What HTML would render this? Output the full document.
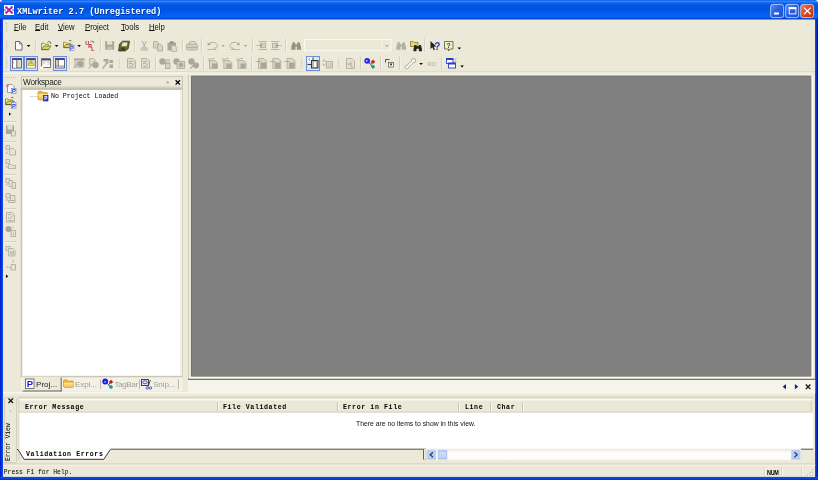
<!DOCTYPE html>
<html>
<head>
<meta charset="utf-8">
<title>XMLwriter 2.7 (Unregistered)</title>
<style>
html,body{margin:0;padding:0;}
body{width:818px;height:480px;overflow:hidden;background:#ece9d8;position:relative;font-family:"Liberation Sans",sans-serif;color:#000;}
.a{position:absolute;}
.mono{font-family:"Liberation Mono",monospace;}
#ttext{left:17px;top:5.7px;font-size:8.6px;font-weight:bold;color:#fff;white-space:nowrap;line-height:12px;text-shadow:0.5px 0.5px 0 #0a2a8a;}
.menu{top:21.9px;font-size:8.4px;line-height:11px;white-space:nowrap;color:#111;transform:scaleX(0.92);transform-origin:0 0;}
.menu u{text-decoration:underline;text-decoration-thickness:0.7px;text-underline-offset:0.3px;}
.st{font-size:6.6px;line-height:9px;white-space:nowrap;}
.b{font-weight:bold;letter-spacing:0.6px;}
.tab{top:379.5px;font-size:8.1px;line-height:10px;white-space:nowrap;color:#a19e8d;}
svg{display:block;}
</style>
</head>
<body>
<div id="root" style="position:absolute;left:0;top:0;width:818px;height:480px;will-change:transform">
<!-- BACKGROUND STRUCTURE -->
<svg class="a" id="bg" style="left:0;top:0" width="818" height="480" viewBox="0 0 818 480">
<defs>
<linearGradient id="gt" x1="0" y1="0" x2="0" y2="1">
<stop offset="0" stop-color="#1362e6"/><stop offset="0.077" stop-color="#2e84fb"/><stop offset="0.155" stop-color="#0f62ee"/>
<stop offset="0.26" stop-color="#0256e2"/><stop offset="0.51" stop-color="#0054e0"/><stop offset="0.72" stop-color="#0260f4"/>
<stop offset="0.87" stop-color="#0464f8"/><stop offset="0.95" stop-color="#0348d4"/><stop offset="1" stop-color="#0340c8"/>
</linearGradient>
<linearGradient id="gl" x1="0" y1="0" x2="1" y2="0"><stop offset="0" stop-color="#0019cf"/><stop offset="0.5" stop-color="#0538dc"/><stop offset="1" stop-color="#0b52e8"/></linearGradient>
<linearGradient id="gr" x1="0" y1="0" x2="1" y2="0"><stop offset="0" stop-color="#1c54e2"/><stop offset="0.5" stop-color="#0530c4"/><stop offset="1" stop-color="#00128c"/></linearGradient>
<linearGradient id="gb" x1="0" y1="0" x2="0" y2="1"><stop offset="0" stop-color="#0b50e6"/><stop offset="0.6" stop-color="#0a3fd6"/><stop offset="1" stop-color="#0630b8"/></linearGradient>
<linearGradient id="gbtn" x1="0" y1="0" x2="1" y2="1"><stop offset="0" stop-color="#5a90f6"/><stop offset="0.45" stop-color="#2a60e4"/><stop offset="1" stop-color="#1c50d0"/></linearGradient>
<linearGradient id="gcls" x1="0" y1="0" x2="1" y2="1"><stop offset="0" stop-color="#ee8460"/><stop offset="0.45" stop-color="#dc4a24"/><stop offset="1" stop-color="#bc3010"/></linearGradient>
<linearGradient id="gsb" x1="0" y1="0" x2="0" y2="1"><stop offset="0" stop-color="#f1f0e9"/><stop offset="0.4" stop-color="#fefefc"/><stop offset="1" stop-color="#fbfaf6"/></linearGradient>
</defs>
<!-- frame -->
<rect x="0" y="19" width="3" height="461" fill="url(#gl)"/>
<rect x="815" y="19" width="3" height="461" fill="url(#gr)"/>
<rect x="0" y="476.900" width="818" height="3.100" fill="url(#gb)"/>
<rect x="0" y="0" width="818" height="19.500" fill="url(#gt)"/>
<path d="M0 0h2.200l-2.200 2.200zM818 0h-2.200l2.200 2.200z" fill="#e4ebf8"/>
<!-- caption buttons -->
<g stroke="#fff" stroke-opacity="0.600" stroke-width="1">
<rect x="770.600" y="4.400" width="13" height="13.200" rx="2.300" fill="url(#gbtn)"/>
<rect x="785.600" y="4.400" width="13" height="13.200" rx="2.300" fill="url(#gbtn)"/>
<rect x="800.700" y="4.400" width="13" height="13.200" rx="2.300" fill="url(#gcls)"/>
</g>
<!-- toolbar bottom edge -->
<rect x="3" y="71.200" width="812" height="1.200" fill="#dcd9c8"/>
<rect x="3" y="72.400" width="185.200" height="1.600" fill="#f5f4ec"/>
<rect x="189" y="72.400" width="624.300" height="3.200" fill="#f1efe3"/>
<!-- workspace header -->
<rect x="21.600" y="76.700" width="160.900" height="10.400" fill="none" stroke="#c4c1b0" stroke-width="0.900"/>
<!-- tree -->
<rect x="20.700" y="87.900" width="162" height="289.600" fill="#cac7b6"/>
<rect x="20.700" y="87.900" width="162" height="2.100" fill="#c6c3b2"/>
<rect x="180" y="89.500" width="2.100" height="286.500" fill="#f0eee1"/>
<rect x="22.300" y="90" width="157.800" height="285.800" fill="#fff"/>
<!-- workspace tabs -->
<rect x="21.200" y="377.500" width="161.300" height="14" fill="#f3f1e6"/>
<rect x="22.400" y="376.600" width="39.100" height="14.700" fill="#ece9d8"/>
<path d="M61.200 377.500v13.800M22.400 391h39.300" stroke="#55544c" stroke-width="0.900" fill="none"/>
<path d="M22.800 377v13.600" stroke="#fdfdfb" stroke-width="0.800"/>
<path d="M100.500 379.500v9.500M139.500 379.500v9.500M178.400 379.500v9.500" stroke="#b3b09f" stroke-width="0.900"/>
<rect x="3" y="392" width="185" height="1.400" fill="#f8f7f2"/>
<!-- splitter band -->
<rect x="188.200" y="74.500" width="0.800" height="304.300" fill="#c6c3b2"/>
<rect x="189" y="74.500" width="2" height="304.300" fill="#f1efe3"/>
<!-- MDI -->
<rect x="190.900" y="75.600" width="622.400" height="302.900" fill="#fbfaf6"/>
<rect x="190.900" y="75.600" width="620.300" height="300.800" fill="#6e6d63"/>
<rect x="191.700" y="76.500" width="619.500" height="299.900" fill="#808080"/>
<!-- MDI tab strip -->
<rect x="188" y="379.800" width="627.200" height="13.800" fill="#f7f5e9"/>
<rect x="188" y="378.800" width="627.200" height="1" fill="#55544c"/>
<!-- bottom pane -->
<rect x="18" y="396.600" width="795.500" height="1.400" fill="#d6d3c2"/>
<rect x="4.500" y="397.400" width="12" height="65.200" rx="1" fill="none" stroke="#cfccba" stroke-width="0.900"/>
<rect x="18.500" y="398" width="1" height="62" fill="#d2cfbe"/>
<rect x="19.400" y="399.400" width="792.100" height="13.200" fill="#c9c6b4"/>
<rect x="19.400" y="399.400" width="791.400" height="12.300" fill="#ebe8d7"/>
<rect x="19.400" y="399.200" width="792.100" height="1.200" fill="#fefefd"/>
<rect x="19.400" y="412.700" width="793.800" height="36" fill="#fff"/>
<g stroke-width="0.900">
<path d="M217.500 402v9M337.500 402v9M458.500 402v9M490.500 402v9M522.500 402v9" stroke="#c2bfae"/>
<path d="M218.500 402v9M338.500 402v9M459.500 402v9M491.500 402v9M523.500 402v9" stroke="#fbfaf6"/>
</g>
<!-- bottom tabs row -->
<rect x="110.500" y="448.700" width="315.500" height="1" fill="#55544c"/>
<rect x="801" y="448.700" width="12.200" height="1" fill="#55544c"/>
<rect x="427" y="449.700" width="373.600" height="10.300" fill="url(#gsb)"/>
<!-- status bar -->
<rect x="3" y="463.600" width="812.200" height="1" fill="#c9c6b5"/>
<rect x="3" y="464.600" width="812.200" height="1" fill="#f8f7f1"/>
<path d="M764.500 467v9M781.500 467v9M801.700 467v9" stroke="#d3d0bf" stroke-width="0.900"/>
<path d="M765.400 467v9M782.400 467v9M802.600 467v9" stroke="#fbfaf6" stroke-width="0.900"/>

</svg>

<!-- window title -->
<div class="a mono" id="ttext">XMLwriter 2.7 (Unregistered)</div>

<!-- menu bar -->
<div class="a menu" style="left:13.7px"><u>F</u>ile</div>
<div class="a menu" style="left:35px"><u>E</u>dit</div>
<div class="a menu" style="left:58px"><u>V</u>iew</div>
<div class="a menu" style="left:85px"><u>P</u>roject</div>
<div class="a menu" style="left:121px"><u>T</u>ools</div>
<div class="a menu" style="left:149px"><u>H</u>elp</div>

<!-- workspace pane -->
<div class="a" style="left:23px;top:76.8px;font-size:8.3px;line-height:10px;white-space:nowrap;letter-spacing:-0.3px;color:#1a1a1a">Workspace</div>
<div class="a mono st" style="left:51px;top:92.4px;">No Project Loaded</div>
<div class="a tab" style="left:36px;color:#222">Proj...</div>
<div class="a tab" style="left:75px;letter-spacing:-0.1px">Expl...</div>
<div class="a tab" style="left:114.5px;letter-spacing:-0.4px">TagBar</div>
<div class="a tab" style="left:153px;letter-spacing:-0.1px">Snip...</div>

<!-- ICONS -->
<svg class="a" id="ico" style="left:0;top:0" width="818" height="480" viewBox="0 0 818 480">
<!-- title icon -->
<rect x="4" y="5" width="10" height="10" fill="#fff"/>
<path d="M5.5 6.5l7 7M12.5 6.5l-7 7" stroke="#b020b0" stroke-width="1.8" fill="none"/>
<path d="M4.5 10l1.5-1.5M4.5 10l1.5 1.5M13.5 10l-1.5-1.5M13.5 10l-1.5 1.5" stroke="#303090" stroke-width="0.8" fill="none"/>
<!-- caption glyphs -->
<rect x="774" y="12.5" width="5" height="2" fill="#fff"/>
<rect x="789.200" y="7.700" width="6.700" height="6.200" fill="none" stroke="#fff" stroke-width="0.900"/>
<rect x="788.800" y="7.200" width="7.500" height="2" fill="#fff"/>
<path d="M804 7.600l6.700 6.700M810.700 7.600l-6.700 6.700" stroke="#fff" stroke-width="1.300" fill="none"/>
<!-- grips -->
<g stroke="#c4c1af" stroke-width="1.200" stroke-dasharray="1 1" fill="none">
<path d="M6.500 23v10M6.500 41v10M6.500 59v10"/>
<path d="M5 77.5h11"/>
</g>
<!-- TB1 separators -->
<g stroke="#ceccba" stroke-width="0.900" fill="none">
<path d="M35.500 38.500v13.500M100.500 38.500v13.500M134.500 38.500v13.500M182.500 38.500v13.500M201.500 38.500v13.500M252.500 38.500v13.500M285.500 38.500v13.500M424.500 38.500v13.500"/>
<path d="M69.500 56.500v13.500M155.500 56.500v13.500M203.500 56.500v13.500M251.500 56.500v13.500M360.500 56.500v13.500M380.500 56.500v13.500M399.500 56.500v13.500M441.500 56.500v13.500"/>
<path d="M4 121.500h13M4 141.500h13M4 174.500h13M4 208.500h13M4 241.500h13"/>
</g>
<g stroke="#f6f5ee" stroke-width="0.800" fill="none">
<path d="M36.400 38.500v13.500M101.400 38.500v13.500M135.400 38.500v13.500M183.400 38.500v13.500M202.400 38.500v13.500M253.400 38.500v13.500M286.400 38.500v13.500M425.400 38.500v13.500"/>
<path d="M70.400 56.500v13.500M156.400 56.500v13.500M204.400 56.500v13.500M252.400 56.500v13.500M361.400 56.500v13.500M381.400 56.500v13.500M400.400 56.500v13.500M442.400 56.500v13.500"/>
<path d="M4 122.400h13M4 142.400h13M4 175.400h13M4 209.400h13M4 242.400h13"/>
</g>
<g stroke="#cac7b5" stroke-width="1.100" stroke-dasharray="1 1" fill="none">
<path d="M119.500 59v10M301.500 59v10M338.500 59v10"/>
</g>
<!-- dropdown arrows -->
<g fill="#000">
<path d="M26.8 45h3.6l-1.8 2z"/>
<path d="M54.8 45h3.6l-1.8 2z"/>
<path d="M77.3 45h3.6l-1.8 2z"/>
<path d="M457.5 47.5h3.6l-1.8 2z"/>
<path d="M419.3 63h3.6l-1.8 2z"/>
<path d="M460.3 65.5h3.6l-1.8 2z"/>
<path d="M9 112.5l2 1.6l-2 1.6z"/>
<path d="M6 274.5l2.2 1.7l-2.2 1.7z"/>
</g>
<g fill="#aca899">
<path d="M221.5 45h3.4l-1.7 2z"/>
<path d="M243.8 45h3.4l-1.7 2z"/>
</g>
<!-- new doc -->
<path d="M15.5 41.5h4l2.5 2.5v6h-6.5z" fill="#fff" stroke="#5a5a5a" stroke-width="0.9"/>
<path d="M19.5 41.5v2.5h2.5" fill="none" stroke="#5a5a5a" stroke-width="0.7"/>
<!-- open folder -->
<path d="M41.500 49.300v-6h2.500l1 1h3.500v1.500" fill="#f6f1aa" stroke="#77742e" stroke-width="0.700"/>
<path d="M41.500 49.500l2.200-3.500h7.300l-2.200 3.500z" fill="#d9d05e" stroke="#6e6a28" stroke-width="0.700"/>
<path d="M41.500 49.700h7.500" stroke="#66642a" stroke-width="0.800"/>
<path d="M47.500 42.500c1-1.200 2.500-1.200 3.200 0.300" fill="none" stroke="#333" stroke-width="0.700"/>
<path d="M50 43.800l1.300-0.200l-0.300-1.300z" fill="#333"/>
<!-- open project -->
<path d="M63.500 47.300v-5h2.500l1 1h3.500v1.500" fill="#f6f1aa" stroke="#77742e" stroke-width="0.700"/>
<path d="M63.500 47.500l2-3h6.800l-2 3z" fill="#d9d05e" stroke="#6e6a28" stroke-width="0.700"/>
<path d="M63.500 47.700h6.500" stroke="#66642a" stroke-width="0.800"/>
<path d="M69 41c0.800-0.900 2-0.900 2.600 0.200" fill="none" stroke="#333" stroke-width="0.700"/>
<rect x="69.600" y="45.300" width="4.400" height="5.200" fill="#fff" stroke="#6878d8" stroke-width="0.600"/>
<text x="70.100" y="50" font-family="Liberation Sans, sans-serif" font-size="5.600" font-weight="bold" fill="#1030f0">P</text>
<!-- URL -->
<g font-family="Liberation Sans, sans-serif" font-weight="bold" font-size="5.200" fill="#b01828">
<text x="85.200" y="45">U</text><text x="88.200" y="48.300">R</text><text x="91.300" y="51.300">L</text>
</g>
<path d="M90.500 41.800c1.200-1 2.600-0.800 3.300 0.300" fill="none" stroke="#444" stroke-width="0.700"/>
<path d="M93.200 43l1.300-0.400l-0.600-1.200z" fill="#444"/>
<!-- save (disabled) -->
<path d="M105.200 41h9v8.600h-9z" fill="#aca899"/>
<rect x="107" y="41" width="5.200" height="3.600" fill="#e4e1d0"/>
<rect x="107.300" y="46.600" width="4.800" height="3" fill="#c4c1af"/>
<!-- save all -->
<path d="M119.5 44l3-2.8h7l-1.3 7.5l-3 2.3h-6.7z" fill="#6e6a20" stroke="#2c2c18" stroke-width="0.7"/>
<path d="M122.5 42.5h5l-0.8 3.8h-5z" fill="#e8e6d8"/>
<path d="M121 47.5h4.2l-0.5 3h-4.2z" fill="#3c3c30"/>
<!-- cut -->
<g stroke="#aca899" stroke-width="0.9" fill="none">
<path d="M142.3 41l2.6 6.5M146.2 41l-2.6 6.5"/>
<circle cx="142.4" cy="49" r="1.4"/><circle cx="146" cy="49" r="1.4"/>
</g>
<!-- copy -->
<g fill="#d8d5c4" stroke="#aca899" stroke-width="0.8">
<path d="M153.5 41.5h3.5l1.5 1.5v5h-5z"/>
<path d="M157.5 44.5h3.5l1.5 1.5v5h-5z"/>
</g>
<!-- paste -->
<path d="M167.5 42.5h8.5v8h-8.5z" fill="#aca899"/>
<rect x="170" y="41.3" width="3.5" height="2" fill="#8f8c7c"/>
<path d="M171.5 45.5h3.5l1.8 1.8v4.2h-5.3z" fill="#dedbca" stroke="#aca899" stroke-width="0.7"/>
<!-- print -->
<g stroke="#aca899" stroke-width="0.8">
<path d="M188.5 44.5l1.5-3h5l1.5 3" fill="#e4e1d0"/>
<path d="M186.5 45.5c0-1 .8-1.5 1.5-1.5h8c.8 0 1.5 .5 1.5 1.5v3c0 1-.8 1.5-1.5 1.5h-8c-.8 0-1.5-.5-1.5-1.5z" fill="#d2cfbe"/>
<path d="M187 47.5h10"/>
</g>
<!-- undo -->
<g>
<path d="M209 44.200c2-2.600 6.500-2.600 8 0.300c1 2.200-1 3.800-3.500 3.800" stroke="#aca899" stroke-width="0.900" fill="none"/>
<path d="M207.500 49.500h9" stroke="#aca899" stroke-width="0.800" fill="none"/>
<path d="M207.500 42.300l0.400 3.200l2.900-1z" fill="#aca899"/>
</g>
<g transform="translate(447.300,0) scale(-1,1)">
<path d="M209 44.200c2-2.600 6.500-2.600 8 0.300c1 2.200-1 3.800-3.500 3.800" stroke="#aca899" stroke-width="0.900" fill="none"/>
<path d="M207.500 49.500h9" stroke="#aca899" stroke-width="0.800" fill="none"/>
<path d="M207.500 42.300l0.400 3.200l2.900-1z" fill="#aca899"/>
</g>
<!-- indent/outdent -->
<g stroke="#aca899" stroke-width="0.800" fill="none">
<path d="M258.500 41.500h8.500M258.500 49.500h8.500M256.500 45.500h5"/>
<rect x="260.500" y="43.300" width="5" height="4.400" fill="#dcd9c8"/>
<path d="M260.800 44l1.800 1.500l-1.800 1.500z" fill="#aca899"/>
<path d="M271 41.500h8.500M271 49.500h8.500M276.500 45.500h5"/>
<rect x="272.500" y="43.300" width="5" height="4.400" fill="#dcd9c8"/>
<path d="M277.200 44l-1.800 1.500l1.800 1.500z" fill="#aca899"/>
</g>
<!-- binoculars 1 (disabled) -->
<g fill="#959282">
<path d="M291.300 49.800v-2.800l1.400-4.800h2l0.800 2.200v5.400z"/>
<path d="M301 49.800v-2.800l-1.400-4.800h-2l-0.800 2.200v5.400z"/>
<rect x="295" y="44.600" width="2.300" height="1.800"/>
</g>
<!-- combo -->
<rect x="304.500" y="39.500" width="86.500" height="11.300" fill="#ece9d8" stroke="#f9f8f1" stroke-width="1"/>
<path d="M382 40v10.500" stroke="#f6f4ea" stroke-width="0.800"/>
<path d="M385.200 45h3.400l-1.700 1.900z" fill="#aca899"/>
<!-- binoculars 2 (disabled lighter) -->
<g fill="#b3b09f">
<path d="M396.300 49.800v-2.800l1.400-4.800h2l0.800 2.200v5.400z"/>
<path d="M406 49.800v-2.800l-1.400-4.800h-2l-0.800 2.200v5.400z"/>
<rect x="400" y="44.600" width="2.300" height="1.800"/>
</g>
<!-- find in files -->
<path d="M410.500 41.500h2.500l1 1h4v4h-7.500z" fill="#e6d85a" stroke="#6e6a28" stroke-width="0.7"/>
<path d="M414.500 45h2v1.300h2.400v-1.300h2l1 4v2.300h-3v-2.500h-2.400v2.500h-3v-2.300z" fill="#202020"/>
<!-- help pointer -->
<path d="M430.500 41l0 8l1.900-1.700l1.300 2.900l1.300-0.600l-1.300-2.800l2.600-0.200z" fill="#222"/>
<text x="434.300" y="49.500" font-family="Liberation Sans, sans-serif" font-size="10" font-weight="bold" fill="#2a35b8">?</text>
<!-- help box -->
<path d="M444.500 41.500h8.500v7.500h-3l-1.500 2v-2h-4z" fill="#f1efb8" stroke="#555" stroke-width="0.8"/>
<text x="446.500" y="48" font-family="Liberation Sans, sans-serif" font-size="7" font-weight="bold" fill="#2a35b8">?</text>

<!-- TB2 checked buttons -->
<g fill="#dde4f3" stroke="#6a8fdc" stroke-width="1">
<rect x="10.500" y="56.500" width="13" height="14"/>
<rect x="24.500" y="56.500" width="13" height="14"/>
<rect x="53.500" y="56.500" width="13" height="14"/>
<rect x="306.500" y="56.500" width="13" height="14"/>
</g>
<!-- view icon 1 -->
<rect x="12.500" y="58.500" width="9" height="9.500" fill="#e3dcc6" stroke="#4a4a52" stroke-width="0.8"/>
<rect x="12.500" y="58.300" width="9" height="1.700" fill="#3c3c98"/>
<rect x="13" y="60" width="3.600" height="7.600" fill="#fff"/>
<rect x="13" y="61" width="1" height="3" fill="#f0e040"/>
<path d="M16.800 60v8" stroke="#4a4a52" stroke-width="0.8"/>
<!-- view icon 2 -->
<rect x="26.500" y="58.500" width="9" height="9.500" fill="#d4cfbc" stroke="#6a6a70" stroke-width="0.8"/>
<rect x="26.500" y="58.300" width="9" height="1.700" fill="#3c3c98"/>
<rect x="27" y="66" width="8" height="1.600" fill="#fff"/>
<path d="M31 60.300l3 5.400h-6z" fill="#f4ec30" stroke="#8a8420" stroke-width="0.5"/>
<path d="M31 62.300v1.800" stroke="#555" stroke-width="0.7"/>
<!-- view icon 3 (wrench) -->
<rect x="41.500" y="59" width="9" height="8.500" fill="#e3dcc6" stroke="#5a5a62" stroke-width="0.8"/>
<rect x="41.500" y="58.500" width="9" height="1.800" fill="#3c3c98"/>
<rect x="44.500" y="65" width="5.600" height="2" fill="#fff"/>
<path d="M41.200 68.300l5.300-5.300" stroke="#fff" stroke-width="2" stroke-linecap="round"/>
<path d="M47.300 60.600a2 2 0 1 0 1.800 2.700l-1.600-0.300l-0.700-1.200z" fill="#fff" stroke="#c8c4b2" stroke-width="0.300"/>
<!-- view icon 4 -->
<rect x="55.500" y="58.500" width="9" height="9.500" fill="#fff" stroke="#4a4a52" stroke-width="0.8"/>
<rect x="55.500" y="58.300" width="9" height="1.700" fill="#3c3c98"/>
<rect x="56" y="60" width="2.200" height="6" fill="#d8d2bc"/>
<rect x="56.400" y="61" width="0.900" height="3" fill="#f0e040"/>
<path d="M58.400 60v6M56 66.200h8.500" stroke="#4a4a52" stroke-width="0.700"/>
<rect x="56" y="66.500" width="8" height="1.300" fill="#b8b4c8"/>

<!-- TB2 gray group 1 -->
<g fill="#aca899">
<rect x="74" y="58.500" width="10.500" height="9.500" fill="#cfccbb"/>
<rect x="74" y="58.500" width="10.500" height="1.600"/>
<circle cx="80.500" cy="64" r="3"/>
<path d="M74 68l4.500-6" stroke="#aca899" stroke-width="1" fill="none"/>
<path d="M89.500 58.500h4l1.500 1.500v5h-5.500z" fill="#dcd9c8" stroke="#aca899" stroke-width="0.800"/>
<circle cx="95.500" cy="65" r="3.200"/>
<path d="M88.700 68.500l3.500-4" stroke="#aca899" stroke-width="1.100" fill="none"/>
<path d="M102.500 68.500l5-6" stroke="#aca899" stroke-width="1.200" fill="none"/>
<path d="M103.500 59h5v2.500h-5z"/>
<path d="M109.500 60h3.500v3h-3.500zM109.500 64.500h3.500v3.500h-3.500zM105.500 61.500h3v2h-3z"/>
</g>
<!-- doc check icons -->
<g fill="#e0ddcc" stroke="#aca899" stroke-width="0.800">
<path d="M127.500 58.500h5.500l2.500 2.500v7h-8z"/>
<path d="M141.500 58.500h5.500l2.500 2.500v7h-8z"/>
</g>
<g fill="none" stroke="#aca899" stroke-width="0.900">
<path d="M129 61.500h4M129 63.500h3M129.500 65.500l1.500 1.500l3-3.500"/>
<path d="M143 61.500h4M143 63.500h3M143.500 65.500l1.500 1.500l3-3.500"/>
</g>
<!-- gray group 2 -->
<g fill="#aca899">
<circle cx="162.500" cy="61.500" r="3.200"/>
<rect x="165.500" y="63.500" width="4.500" height="5" fill="#d4d1c0" stroke="#aca899" stroke-width="0.800"/>
<rect x="166.500" y="59.500" width="3" height="3" fill="#dcd9c8" stroke="#aca899" stroke-width="0.600"/>
<circle cx="176.500" cy="61.500" r="3.200"/>
<rect x="177" y="61.500" width="7.500" height="7" fill="#d4d1c0" stroke="#aca899" stroke-width="0.800"/>
<circle cx="181" cy="65" r="2.300"/>
<circle cx="191.500" cy="61.500" r="3.200"/>
<circle cx="196" cy="65.500" r="3"/>
<path d="M190.500 68.500l4.500-5" stroke="#aca899" stroke-width="1.200" fill="none"/>
</g>
<!-- gray group 3: three similar docs -->
<g>
<path d="M209.500 60.500h5.500l2.500 2.500v5.500h-8z" fill="#d9d6c5" stroke="#aca899" stroke-width="0.800"/>
<path d="M212 63.500h5v4.500h-5z" fill="#aca899"/>
<path d="M207.500 59h4M208 60.500h2.500M211.500 58.500h3" stroke="#aca899" stroke-width="0.700"/>
</g>
<g transform="translate(14.300,0)">
<path d="M209.500 60.500h5.500l2.500 2.500v5.500h-8z" fill="#d9d6c5" stroke="#aca899" stroke-width="0.800"/>
<path d="M212 63.500h5v4.500h-5z" fill="#aca899"/>
<path d="M207.500 59h4M208 60.500h2.500M211.500 58.500h3" stroke="#aca899" stroke-width="0.700"/>
</g>
<g transform="translate(28.500,0)">
<path d="M209.500 60.500h5.500l2.500 2.500v5.500h-8z" fill="#d9d6c5" stroke="#aca899" stroke-width="0.800"/>
<path d="M212 63.500h5v4.500h-5z" fill="#aca899"/>
<path d="M207.500 59h4M208 60.500h2.500M211.500 58.500h3" stroke="#aca899" stroke-width="0.700"/>
</g>
<!-- gray group 4 -->
<g>
<path d="M258.500 58.500h5.500l2.500 2.500v7.500h-8z" fill="#dcd9c8" stroke="#aca899" stroke-width="0.800"/>
<path d="M260.500 62.500h5.500v5.500h-5.500z" fill="#aca899"/>
<path d="M255.500 61.500h4.500" stroke="#aca899" stroke-width="0.800"/>
<path d="M259 60l1.800 1.500l-1.800 1.500z" fill="#aca899"/>
</g>
<g transform="translate(14.300,0)">
<path d="M258.500 58.500h5.500l2.500 2.500v7.500h-8z" fill="#dcd9c8" stroke="#aca899" stroke-width="0.800"/>
<path d="M260.500 62.500h5.500v5.500h-5.500z" fill="#aca899"/>
<path d="M255.500 61.500h4.500" stroke="#aca899" stroke-width="0.800"/>
<path d="M259 60l1.800 1.500l-1.800 1.500z" fill="#aca899"/>
</g>
<g transform="translate(28.500,0)">
<path d="M258.500 58.500h5.500l2.500 2.500v7.500h-8z" fill="#dcd9c8" stroke="#aca899" stroke-width="0.800"/>
<path d="M260.500 62.500h5.500v5.500h-5.500z" fill="#aca899"/>
<path d="M255.500 61.500h4.500" stroke="#aca899" stroke-width="0.800"/>
<path d="M259 60l1.800 1.500l-1.800 1.500z" fill="#aca899"/>
</g>
<!-- checked icon -->
<rect x="307.500" y="57.500" width="5" height="4.500" fill="#fff"/>
<path d="M310 58.500l-1.500 1l1.500 1" stroke="#5050e0" stroke-width="0.600" fill="none"/>
<rect x="311.500" y="60.500" width="6.500" height="7.500" fill="#b9b9b9" stroke="#2a2a2a" stroke-width="0.900"/>
<rect x="314" y="62" width="2" height="5" fill="#fff"/>
<path d="M307.500 64.500h4M313 57.500v3" stroke="#2a2a2a" stroke-width="0.900"/>
<!-- next gray icon -->
<rect x="326.500" y="61.500" width="6" height="6.500" fill="#e0ddcc" stroke="#aca899" stroke-width="0.800"/>
<path d="M329 63v4M331 63v4" stroke="#aca899" stroke-width="0.600"/>
<path d="M322.500 62l1.500-2.500l1.500 2.500M322.500 63.500l1.500 2.500l1.500-2.500" stroke="#aca899" stroke-width="0.800" fill="none"/>
<!-- doc with arrow -->
<path d="M346.500 58.500h5.500l2.500 2.500v7.500h-8z" fill="#e4e1d0" stroke="#aca899" stroke-width="0.800"/>
<path d="M345.500 64h5M351 61.500v5.500h2" stroke="#aca899" stroke-width="0.700" fill="none"/>
<path d="M349.500 62.500l1.700 1.500l-1.700 1.500z" fill="#aca899"/>
<!-- tagbar icon -->
<circle cx="367.200" cy="60.800" r="2.900" fill="#2a2af0"/>
<text x="366.300" y="62.300" font-family="Liberation Sans, sans-serif" font-size="4" font-weight="bold" fill="#fff">r</text>
<path d="M369 62.700l1.600 1.500l2-2.400M370.600 64.200l2 2.300" stroke="#333" stroke-width="0.900" fill="none"/>
<path d="M373 59.500l2.200 2.200l-2.200 2.200l-2.200-2.200z" fill="#c8282a"/>
<path d="M373 64.500l2.200 2.200l-2.200 2.200l-2.200-2.200z" fill="#1e9a9a"/>
<!-- small icon -->
<path d="M385.500 62.500v-3h4" stroke="#444" stroke-width="0.900" fill="none"/>
<rect x="388.500" y="62.500" width="5" height="4.500" fill="#fff" stroke="#555" stroke-width="0.700"/>
<path d="M389.500 63.500h3l-1.500 2.500z" fill="#222"/>
<!-- wrench -->
<path d="M406.800 67.300l6-6" stroke="#8f8d7d" stroke-width="2.800" stroke-linecap="round"/>
<circle cx="413.600" cy="60.600" r="2.300" fill="#8f8d7d"/>
<circle cx="406.600" cy="67.400" r="1.900" fill="#8f8d7d"/>
<path d="M406.800 67.300l6-6" stroke="#fff" stroke-width="1.700" stroke-linecap="round"/>
<circle cx="413.600" cy="60.600" r="1.600" fill="#fff"/>
<circle cx="406.600" cy="67.400" r="1.200" fill="#fff"/>
<path d="M413.800 58.500l1.800 1.800l-1.200 0.800l-1.200-1.200z" fill="#ece9d8"/>
<path d="M405 68l1 1l0.800-1.200z" fill="#ece9d8"/>
<text x="427.200" y="65.900" font-family="Liberation Sans, sans-serif" font-size="6" fill="#aeab9a">RO</text>
<!-- windows icon -->
<g fill="#fff" stroke="#2a3ac8" stroke-width="0.900">
<rect x="446.500" y="58.500" width="6.500" height="5"/>
<rect x="448.500" y="63" width="7" height="5"/>
</g>
<rect x="446.500" y="58.300" width="6.500" height="1.700" fill="#2a3ac8"/>
<rect x="448.500" y="62.800" width="7" height="1.700" fill="#2a3ac8"/>
<path d="M454.500 60l1.500-1.500M455 61.500h1.500" stroke="#5060e0" stroke-width="0.600"/>
<defs><linearGradient id="gfold" x1="0" y1="0" x2="0" y2="1"><stop offset="0" stop-color="#fdec9c"/><stop offset="1" stop-color="#f3bf48"/></linearGradient></defs>
<!-- LEFT TOOLBAR -->
<!-- new project -->
<path d="M7.500 84.500h4.500l2 2v6h-6.500z" fill="#fff" stroke="#777" stroke-width="0.700"/>
<path d="M6 85.800h3M7.500 84.300v3M6.400 84.700l2.200 2.200M8.600 84.700l-2.200 2.200" stroke="#f050d0" stroke-width="0.700"/>
<rect x="11.500" y="88.300" width="4.500" height="5.300" fill="#fff" stroke="#6070c8" stroke-width="0.600"/>
<text x="12" y="93" font-family="Liberation Sans, sans-serif" font-size="5.600" font-weight="bold" fill="#1030f0">P</text>
<!-- open project -->
<path d="M5.500 104.300v-5.300h2.500l1 1h3.500v1.500" fill="#f6f1aa" stroke="#66642a" stroke-width="0.700"/>
<path d="M5.500 104.500l2-3.300h6.800l-2 3.300z" fill="#d9d05e" stroke="#5e5c28" stroke-width="0.700"/>
<path d="M5.500 104.700h6.500" stroke="#55532a" stroke-width="0.800"/>
<path d="M11 98c0.800-0.900 2-0.900 2.600 0.200" fill="none" stroke="#333" stroke-width="0.700"/>
<rect x="11.500" y="102.800" width="4.500" height="5.300" fill="#fff" stroke="#6070c8" stroke-width="0.600"/>
<text x="12" y="107.500" font-family="Liberation Sans, sans-serif" font-size="5.600" font-weight="bold" fill="#1030f0">P</text>
<!-- save project gray -->
<rect x="6" y="125.500" width="8" height="8.500" fill="#aca899"/>
<rect x="7.500" y="125.500" width="5" height="4" fill="#e4e1d0"/>
<rect x="11.500" y="131" width="4" height="5" fill="#e4e1d0" stroke="#aca899" stroke-width="0.700"/>
<!-- gray icons -->
<g fill="#e6e3d2" stroke="#aca899" stroke-width="0.800">
<path d="M6 145.500h3.500v4h-3.500z"/>
<path d="M9.500 148.500h4l2 2v4.500h-6z"/>
<path d="M6 159.500h3.500v4h-3.500z"/>
<path d="M8.500 168.500v-4h3l1 1h3v3z"/>
<path d="M6 178.500h3.500v4.500h-3.500z"/>
<path d="M9 180.500h3.500v6h-3.500z"/>
<path d="M12 182.500h3.500v6h-3.500z"/>
<path d="M6 193.500h4v4.500h-4z"/>
<path d="M10.500 195.500h4.500v5h-4.500z"/>
<path d="M8.500 200.500h6.500v2h-6.500z"/>
<path d="M6.500 212.500h5.500l2.500 2.500v7h-8z"/>
<path d="M11 230.500h4.500v6h-4.500z"/>
<path d="M6 246.500h4v4h-4z"/>
<path d="M8.500 248.500h4.500l2 2v5.500h-6.500z"/>
<path d="M11 264.500h4.500v5.500h-4.500z"/>
</g>
<g fill="none" stroke="#aca899" stroke-width="0.800">
<path d="M8 214.500h3M8 217l1.500 2l3-3.500M8 220.500h5"/>
<path d="M10.500 251v3l1.500 1l1.500-1v-3M12 251v3"/>
<path d="M12 228l2-1.500M13.500 233v2"/>
<path d="M12 263c2-1 2-3 0.500-3.500M6 268l2-1.500l1.500 1.500l1.500-1"/>
</g>
<circle cx="8.500" cy="229" r="3" fill="#aca899"/>
<g fill="#aca899">
<rect x="6.300" y="151.500" width="1" height="2.500"/><rect x="6.300" y="165.500" width="1" height="2.500"/>
<rect x="6.300" y="184" width="1" height="1.500"/><rect x="6.300" y="199" width="1" height="2"/>
</g>
<!-- toolbar right edge -->

<!-- workspace header icons -->
<path d="M175.600 80.200l4.400 4.400M180 80.200l-4.400 4.400" stroke="#000" stroke-width="1.300"/>
<path d="M165.800 83.300h3.800l-1.900-2.200z" fill="#a8a594"/>
<!-- tree -->
<path d="M30 96.500h8" stroke="#b0b0b0" stroke-width="0.800" stroke-dasharray="1 0.700"/>
<path d="M38 92.500c0-0.700 0.500-1.200 1.200-1.200h2.600l1 1.200h3.700c0.700 0 1.200 0.500 1.200 1.200v5c0 0.700-0.500 1.200-1.200 1.200h-7.300c-0.700 0-1.200-0.500-1.200-1.200z" fill="#eeb440" stroke="#c08418" stroke-width="0.600"/>
<path d="M38.500 94h9v4.500c0 0.500-0.300 0.800-0.800 0.800h-7.400c-0.500 0-0.800-0.300-0.800-0.800z" fill="url(#gfold)"/>
<rect x="43.500" y="95.500" width="4.500" height="5.500" fill="#2a3af0" stroke="#222" stroke-width="0.600"/>
<text x="44.300" y="100.200" font-family="Liberation Sans, sans-serif" font-size="4.800" font-weight="bold" fill="#fff">P</text>

<!-- workspace tab icons -->
<rect x="25.500" y="379" width="8.500" height="9.500" fill="#fff" stroke="#555" stroke-width="0.800"/>
<text x="26.800" y="387.300" font-family="Liberation Sans, sans-serif" font-size="9.500" font-weight="bold" fill="#1515f0">P</text>
<path d="M63.500 381c0-0.700 0.500-1.200 1.200-1.200h2.300l1 1.200h4.300c0.700 0 1.200 0.500 1.200 1.200v4c0 0.700-0.500 1.200-1.200 1.200h-7.600c-0.700 0-1.200-0.500-1.200-1.200z" fill="#eeb440" stroke="#c88e20" stroke-width="0.600"/>
<path d="M64 382.800h9.500v3.200c0 0.600-0.400 1-1 1h-7.500c-0.600 0-1-0.400-1-1z" fill="url(#gfold)"/>
<circle cx="105.200" cy="381.500" r="2.900" fill="#1a1af0"/>
<text x="104.400" y="383" font-family="Liberation Sans, sans-serif" font-size="4" font-weight="bold" fill="#fff">r</text>
<path d="M107 383.200l1.600 1.600l2-2.600M108.600 384.800l2 2.400" stroke="#333" stroke-width="0.900" fill="none"/>
<path d="M111 379.700l2.200 2.200l-2.200 2.200l-2.200-2.200z" fill="#b02020"/>
<path d="M111 384.800l2.200 2.200l-2.200 2.200l-2.200-2.200z" fill="#1e9a9a"/>
<rect x="141.500" y="379.500" width="7" height="6" fill="#e8e8f0" stroke="#333" stroke-width="0.900"/>
<ellipse cx="145" cy="382.300" rx="2.300" ry="1.500" fill="none" stroke="#2a35c8" stroke-width="0.800"/>
<path d="M150.500 380l-2.500 6.500" stroke="#222" stroke-width="0.800"/>
<circle cx="147.300" cy="388" r="1.200" fill="none" stroke="#2a35c8" stroke-width="0.800"/>
<circle cx="150.500" cy="388" r="1.200" fill="none" stroke="#2a35c8" stroke-width="0.800"/>

<!-- MDI tab strip buttons -->
<path d="M786 384.100v5.200l-3.300-2.600z" fill="#16169a"/>
<path d="M794.900 384.100v5.200l3.300-2.600z" fill="#16169a"/>
<path d="M805.800 384.500l4.600 4.600M810.400 384.500l-4.600 4.600" stroke="#111" stroke-width="1.300"/>

<!-- bottom pane caption icons -->
<path d="M8.500 398.500l4.500 4.500M13 398.500l-4.500 4.500" stroke="#111" stroke-width="1.200"/>
<path d="M10 409.800l1.600 1.500l-1.600 1.500z" fill="#c0bdac"/>
<!-- validation tab -->
<path d="M17 449.500h1l6 9.800h79.800l6.500-9.800" fill="#fff" stroke="#222" stroke-width="0.900"/>
<path d="M19 449h91" stroke="#fff" stroke-width="1.200"/>
<!-- scrollbar -->
<rect x="423.100" y="449.200" width="2.900" height="10.500" fill="#fdfdfb"/>
<path d="M423.600 449.200v10.500" stroke="#55544c" stroke-width="1"/>
<path d="M425.700 450v9.700M423.500 459.400h2.500" stroke="#c0bdac" stroke-width="0.700" fill="none"/>
<rect x="427.100" y="450.100" width="9" height="9.200" rx="0.800" fill="#bacff8"/>
<rect x="427.100" y="458.600" width="9" height="0.800" fill="#9db8f0"/>
<path d="M433 452.200l-2.800 2.500l2.800 2.500" stroke="#35456b" stroke-width="1.400" fill="none"/>
<rect x="437.800" y="450.100" width="9.500" height="9.200" rx="0.800" fill="#b4cbf8"/>
<rect x="437.800" y="458.600" width="9.500" height="0.800" fill="#9db8f0"/>
<path d="M440.200 452.500v4.500M442.500 452.500v4.500M444.800 452.500v4.500M440.200 452.800h4.600" stroke="#dfe9fc" stroke-width="0.900" fill="none"/>
<rect x="791.200" y="450.100" width="9.300" height="9.200" rx="0.800" fill="#bacff8"/>
<rect x="791.200" y="458.600" width="9.300" height="0.800" fill="#9db8f0"/>
<path d="M794.400 452.200l2.800 2.500l-2.800 2.500" stroke="#35456b" stroke-width="1.400" fill="none"/>
<!-- size grip -->
<g fill="#fdfdfb">
<rect x="813" y="469.800" width="1.300" height="1.300"/><rect x="810.300" y="472.600" width="1.300" height="1.300"/><rect x="813" y="472.600" width="1.300" height="1.300"/>
<rect x="807.600" y="475.300" width="1.300" height="1.300"/><rect x="810.300" y="475.300" width="1.300" height="1.300"/><rect x="813" y="475.300" width="1.300" height="1.300"/>
</g>
<g fill="#c5c2b0">
<rect x="812.300" y="469.100" width="1.300" height="1.300"/><rect x="809.600" y="471.900" width="1.300" height="1.300"/><rect x="812.300" y="471.900" width="1.300" height="1.300"/>
<rect x="806.900" y="474.600" width="1.300" height="1.300"/><rect x="809.600" y="474.600" width="1.300" height="1.300"/><rect x="812.300" y="474.600" width="1.300" height="1.300"/>
</g>

</svg>

<!-- bottom pane (error view) -->
<div class="a mono" style="left:5px;top:461px;height:8px;font-size:6.6px;line-height:8px;white-space:nowrap;transform:rotate(-90deg);transform-origin:0 0;letter-spacing:-0.2px">Error View</div>
<div class="a mono st b" style="left:25px;top:403px">Error Message</div>
<div class="a mono st b" style="left:223px;top:403px">File Validated</div>
<div class="a mono st b" style="left:343px;top:403px">Error in File</div>
<div class="a mono st b" style="left:465px;top:403px">Line</div>
<div class="a mono st b" style="left:497px;top:403px">Char</div>
<div class="a" style="left:356.2px;top:419.4px;font-size:7.9px;line-height:10px;white-space:nowrap;transform:scaleX(0.864);transform-origin:0 0;color:#111">There are no items to show in this view.</div>
<div class="a mono st b" style="left:26px;top:450px">Validation Errors</div>

<!-- status bar -->
<div class="a mono st" style="left:3.8px;top:467.9px;font-size:6.35px">Press F1 for Help.</div>
<div class="a st" style="left:767px;top:467.5px;font-size:6.8px;letter-spacing:-0.3px;font-weight:bold;transform:scaleX(0.8);transform-origin:0 0">NUM</div>
</div>
</body>
</html>
